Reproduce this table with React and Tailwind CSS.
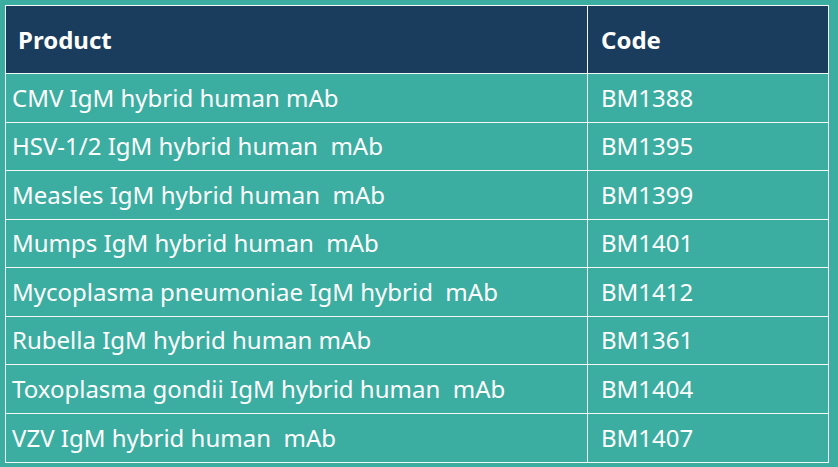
const rows = [
  ["CMV IgM hybrid human mAb", "BM1388"],
  ["HSV-1/2 IgM hybrid human\u00a0 mAb", "BM1395"],
  ["Measles IgM hybrid human\u00a0 mAb", "BM1399"],
  ["Mumps IgM hybrid human\u00a0 mAb", "BM1401"],
  ["Mycoplasma pneumoniae IgM hybrid\u00a0 mAb", "BM1412"],
  ["Rubella IgM hybrid human mAb", "BM1361"],
  ["Toxoplasma gondii IgM hybrid human\u00a0 mAb", "BM1404"],
  ["VZV IgM hybrid human\u00a0 mAb", "BM1407"],
];

export default function App() {
  return (
    <div className="min-h-screen bg-[#3caea1] p-[5px] font-['Noto_Sans',sans-serif] text-white">
      <div className="w-[824px] border border-[#f2f9f8]">
        <div className="flex h-[68px] bg-[#1a3d5e] border-b border-[#f2f9f8] text-[24px] font-bold">
          <div className="w-[582px] border-r border-[#f2f9f8] flex items-center pl-[12px]">Product</div>
          <div className="flex-1 flex items-center pl-[13px]">Code</div>
        </div>
        {rows.map(([name, code], i) => (
          <div
            key={code}
            className={`flex h-[48.5px] text-[24px] ${i < rows.length - 1 ? "border-b border-[#f2f9f8]" : ""}`}
          >
            <div className="w-[582px] border-r border-[#f2f9f8] flex items-center pl-[6px] whitespace-nowrap">{name}</div>
            <div className="flex-1 flex items-center pl-[13px]">{code}</div>
          </div>
        ))}
      </div>
    </div>
  );
}
